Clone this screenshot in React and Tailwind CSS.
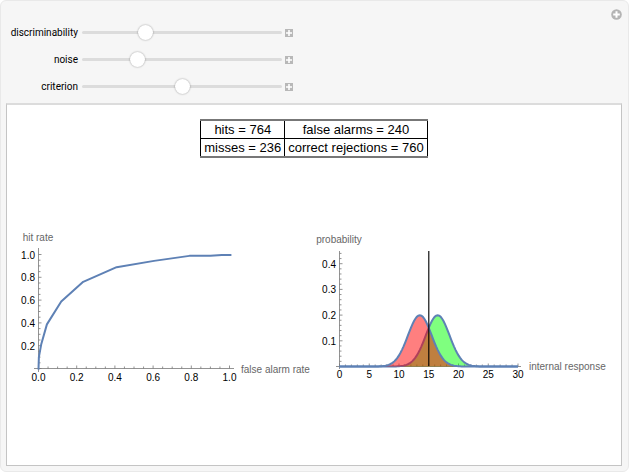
import React, { useState } from 'react';

const SLIDERS = [
  { id: 'discriminability', initial: 30 },
  { id: 'noise', initial: 26 },
  { id: 'criterion', initial: 50 },
];

const OUTCOMES = [
  ['hits = 764', 'false alarms = 240'],
  ['misses = 236', 'correct rejections = 760'],
];

const LINE_BLUE = '#5e81b5';

// [false alarm rate, hit rate]
const ROC_POINTS = [
  [0, -0.01],
  [0.002, 0.1],
  [0.014, 0.21],
  [0.044, 0.387],
  [0.119, 0.588],
  [0.234, 0.76],
  [0.409, 0.889],
  [0.605, 0.944],
  [0.79, 0.988],
  [0.9, 0.99],
  [0.96, 0.996],
  [1.01, 0.996],
];

const range = (count) => Array.from({ length: count }, (_, i) => i);

const normal = (x, mean, sd) =>
  Math.exp(-((x - mean) ** 2) / (2 * sd * sd)) / (sd * Math.sqrt(2 * Math.PI));

const toPoints = (points) => points.map(([x, y]) => `${x.toFixed(2)},${y.toFixed(2)}`).join(' ');

const ControlSlider = ({ id, initial }) => {
  const [value, setValue] = useState(initial);

  return (
    <div className="flex h-[27px] items-center">
      <label htmlFor={id} className="w-[72px] text-right text-[10px] leading-4 text-black">
        {id}
      </label>
      <input
        id={id}
        type="range"
        min="0"
        max="100"
        value={value}
        onChange={(e) => setValue(Number(e.target.value))}
        className="ml-1 h-[15px] w-[200px] cursor-pointer appearance-none bg-transparent [&::-webkit-slider-runnable-track]:h-[3px] [&::-webkit-slider-runnable-track]:rounded-sm [&::-webkit-slider-runnable-track]:bg-[#dcdcdc] [&::-webkit-slider-thumb]:-mt-[6px] [&::-webkit-slider-thumb]:size-[15px] [&::-webkit-slider-thumb]:appearance-none [&::-webkit-slider-thumb]:rounded-full [&::-webkit-slider-thumb]:bg-white [&::-webkit-slider-thumb]:shadow-[0_0_2px_rgba(0,0,0,0.4)]"
      />
      <button type="button" aria-label={`Expand ${id}`} className="ml-[3px] size-2 bg-[#b8b8b8]">
        <svg viewBox="0 0 8 8" className="size-2">
          <path d="M4 1v6M1 4h6" stroke="#fff" strokeWidth="1.6" />
        </svg>
      </button>
    </div>
  );
};

const OutcomeTable = () => (
  <table className="mx-auto border-collapse border-x border-y-2 border-x-black border-y-[#777] text-center text-[13px] leading-[17px] text-black">
    <tbody>
      {OUTCOMES.map((row, i) => (
        <tr key={row[0]} className={i > 0 ? 'border-t border-black' : ''}>
          {row.map((cell) => (
            <td key={cell} className="border-x border-black px-[3px] py-0">
              {cell}
            </td>
          ))}
        </tr>
      ))}
    </tbody>
  </table>
);

const RocPlot = () => {
  const sx = (v) => 31.5 + v * 191;
  const sy = (v) => 138.5 - v * 114;

  return (
    <svg viewBox="0 0 307 160" className="block w-full" fontSize="10">
      <g stroke="#777" strokeWidth="0.8">
        <path d="M27 138.5H227M31.5 18V142" />
        {range(21).map((i) => (
          <path key={`x${i}`} d={`M${sx(i * 0.05)} 138.5v${i % 4 === 0 ? -3 : -2}`} />
        ))}
        {range(21).map((i) => (
          <path key={`y${i}`} d={`M31.5 ${sy(i * 0.05)}h${i % 4 === 0 ? 3 : 2}`} />
        ))}
      </g>
      <polyline
        points={toPoints(ROC_POINTS.map(([x, y]) => [sx(x), sy(y)]))}
        fill="none"
        stroke={LINE_BLUE}
        strokeWidth="2"
        strokeLinejoin="round"
      />
      <g fill="#000">
        {range(6).map((i) => (
          <text key={i} x={sx(i * 0.2)} y="151" textAnchor="middle">
            {(i * 0.2).toFixed(1)}
          </text>
        ))}
        {range(5).map((i) => (
          <text key={i} x="28" y={sy((i + 1) * 0.2) + 4} textAnchor="end">
            {((i + 1) * 0.2).toFixed(1)}
          </text>
        ))}
      </g>
      <g fill="#666">
        <text x="31" y="11" textAnchor="middle">hit rate</text>
        <text x="234" y="143">false alarm rate</text>
      </g>
    </svg>
  );
};

const ResponsePlot = () => {
  const sx = (v) => 25.5 + v * 5.95;
  const sy = (v) => 136.5 - v * 257;
  const curve = (mean) => range(121).map((i) => [sx(i / 4), sy(normal(i / 4, mean, 2))]);
  const noise = toPoints(curve(13.5));
  const signal = toPoints(curve(16.5));

  return (
    <svg viewBox="0 0 307 160" className="block w-full" fontSize="10">
      <g stroke="#777" strokeWidth="0.8">
        <path d="M22 136.5H207M25.5 21V139" />
        {range(31).map((i) => (
          <path key={`x${i}`} d={`M${sx(i)} 136.5v${i % 5 === 0 ? -3 : -2}`} />
        ))}
        {range(23).map((i) => (
          <path key={`y${i}`} d={`M25.5 ${sy(i * 0.02)}h${i % 5 === 0 ? 3 : 2}`} />
        ))}
      </g>
      <g strokeWidth="2" stroke={LINE_BLUE}>
        <polygon points={signal} fill="#00ff00" fillOpacity="0.5" stroke="none" />
        <polyline points={signal} fill="none" />
        <polygon points={noise} fill="#ff0000" fillOpacity="0.5" stroke="none" />
        <polyline points={noise} fill="none" />
      </g>
      {/* Decision criterion */}
      <path d={`M${sx(15)} 21V136`} stroke="#000" strokeOpacity="0.8" strokeWidth="1.4" />
      <g fill="#000">
        {range(7).map((i) => (
          <text key={i} x={sx(i * 5)} y="148" textAnchor="middle">
            {i * 5}
          </text>
        ))}
        {range(4).map((i) => (
          <text key={i} x="22" y={sy((i + 1) * 0.1) + 4} textAnchor="end">
            {((i + 1) * 0.1).toFixed(1)}
          </text>
        ))}
      </g>
      <g fill="#666">
        <text x="25" y="13" textAnchor="middle">probability</text>
        <text x="215" y="140">internal response</text>
      </g>
    </svg>
  );
};

const App = () => (
  <main className="rounded-md border border-[#e9e9e9] bg-[#f6f6f6] pb-[5px] pl-[5px] pr-[6px] font-['Liberation_Sans',Arial,sans-serif]">
    <div className="flex items-start justify-between pb-[3px]">
      <div className="pt-[18px] font-[Roboto,sans-serif]">
        {SLIDERS.map((slider) => (
          <ControlSlider key={slider.id} {...slider} />
        ))}
      </div>
      <button type="button" aria-label="Show options" className="mt-2 size-[11px]">
        <svg viewBox="0 0 11 11" className="size-[11px]">
          <circle cx="5.5" cy="5.5" r="5.3" fill="#b4b4b4" />
          <path d="M5.5 2.2v6.6M2.2 5.5h6.6" stroke="#fff" strokeWidth="2" />
        </svg>
      </button>
    </div>

    <section className="border border-t-2 border-[#c4c4c4] border-t-[#dcdcdc] bg-white pb-[75px] pt-[14px]">
      <OutcomeTable />
      <div className="mt-[72px] grid grid-cols-2">
        <RocPlot />
        <ResponsePlot />
      </div>
    </section>
  </main>
);

export default App;
